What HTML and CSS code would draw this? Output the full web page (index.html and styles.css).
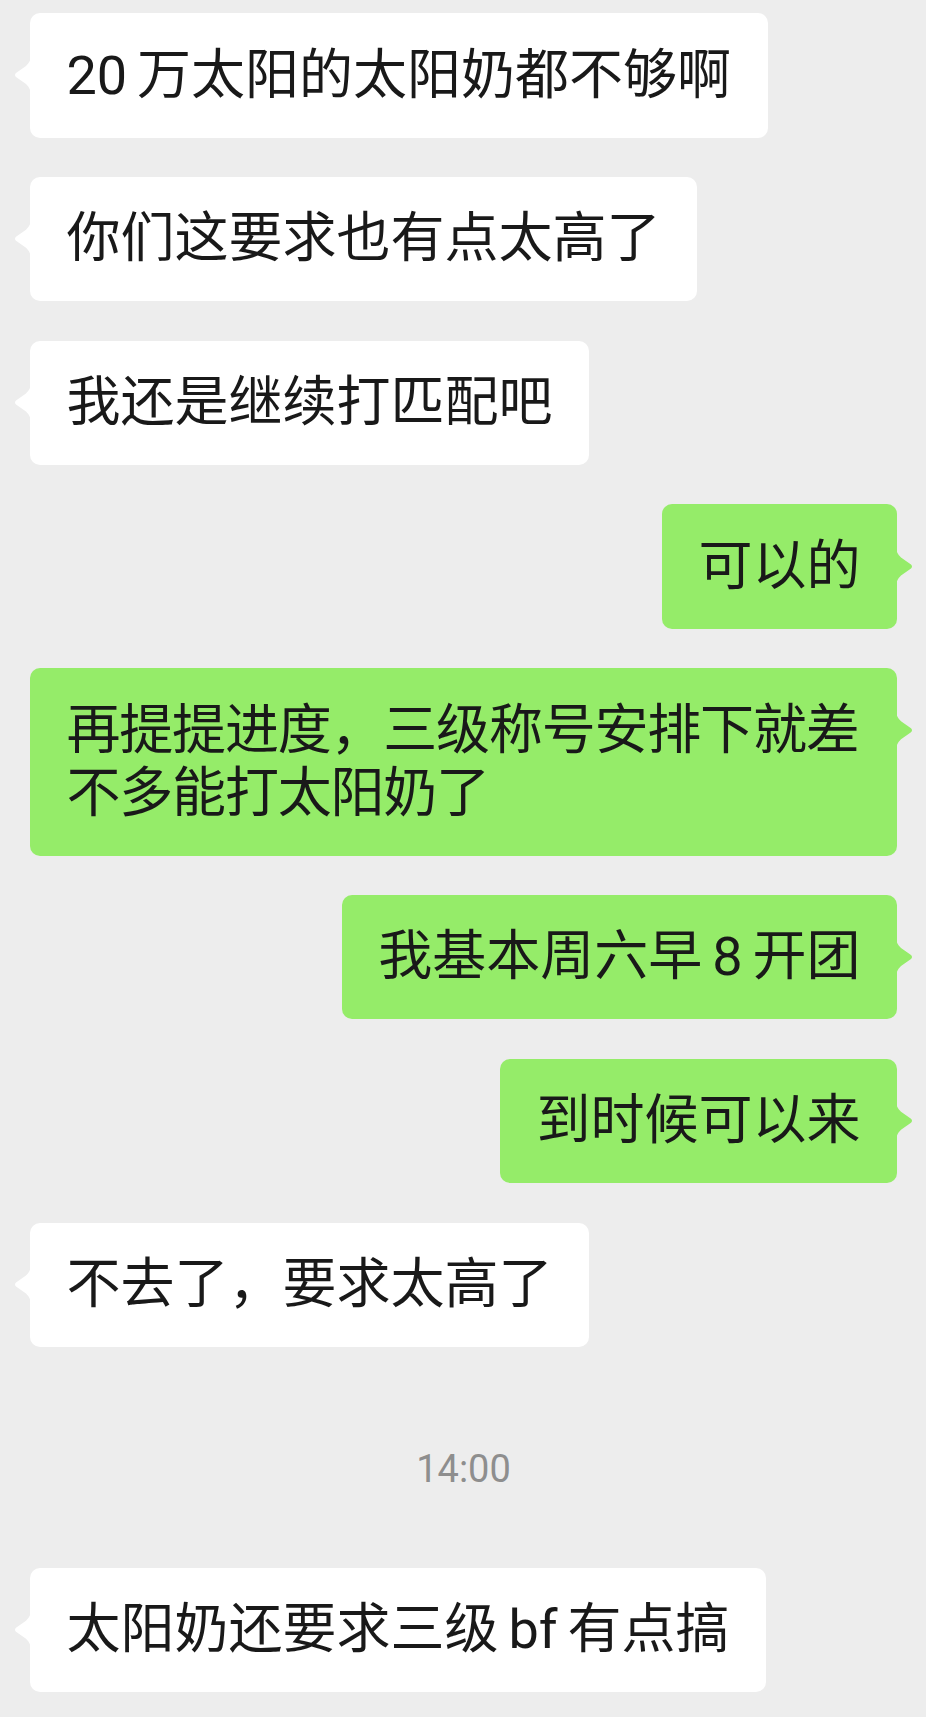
FILE: index.html
```html
<!DOCTYPE html>
<html lang="zh-CN">
<head>
    <meta charset="UTF-8">
    <meta name="viewport" content="width=device-width, initial-scale=1.0">
    <title>聊天记录</title>
    <link rel="stylesheet" href="styles.css">
</head>
<body>
    <div class="chat">
        <div class="row">
            <div class="bubble">20 万太阳的太阳奶都不够啊</div>
        </div>
        <div class="row">
            <div class="bubble">你们这要求也有点太高了</div>
        </div>
        <div class="row">
            <div class="bubble">我还是继续打匹配吧</div>
        </div>

        <div class="row mine">
            <div class="bubble">可以的</div>
        </div>
        <div class="row mine">
            <div class="bubble long">再提提进度，三级称号安排下就差不多能打太阳奶了</div>
        </div>
        <div class="row mine">
            <div class="bubble">我基本周六早 8 开团</div>
        </div>
        <div class="row mine">
            <div class="bubble">到时候可以来</div>
        </div>

        <div class="row">
            <div class="bubble">不去了，要求太高了</div>
        </div>

        <div class="time">14:00</div>

        <div class="row">
            <div class="bubble">太阳奶还要求三级 bf 有点搞</div>
        </div>
    </div>
</body>
</html>
```

FILE: styles.css
```css
html,
body {
  margin: 0;
  background-color: #ededed;
}

body {
  min-height: 1717px;
  font-family: Roboto, "Noto Sans CJK SC", sans-serif;
  color: #191919;
}

.chat {
  display: flex;
  flex-direction: column;
  gap: 39.3px;
  padding: 13px 29px 24px 30px;
}

.row {
  display: flex;
  justify-content: flex-start;
}

.row.mine {
  justify-content: flex-end;
}

.bubble {
  position: relative;
  max-width: 100%;
  box-sizing: border-box;
  padding: 30.5px 36.5px 31px;
  font-size: 54px;
  line-height: 63px;
  word-spacing: -3.5px;
  background-color: #ffffff;
  border-radius: 10px;
}

/* wrapped messages run a touch tighter so 差 stays on the first row */
.bubble.long {
  letter-spacing: -1.2px;
}

/* little arrow pointing at the sender */
.bubble::before {
  content: "";
  position: absolute;
  top: 41px;
  left: -16px;
  width: 17px;
  height: 42px;
  background-color: inherit;
  clip-path: path("M17 0 C17 6 15 9 12 12 L2 19 Q0 21 2 23 L12 30 C15 33 17 36 17 42 Z");
}

.mine .bubble {
  background-color: #95ec69;
}

.mine .bubble::before {
  left: auto;
  right: -16px;
  clip-path: path("M0 0 C0 6 2 9 5 12 L15 19 Q17 21 15 23 L5 30 C2 33 0 36 0 42 Z");
}

.time {
  margin: 63px 0 39px;
  text-align: center;
  font-family: Roboto, sans-serif;
  font-size: 38px;
  line-height: 40px;
  color: #8e8e8e;
}
```
